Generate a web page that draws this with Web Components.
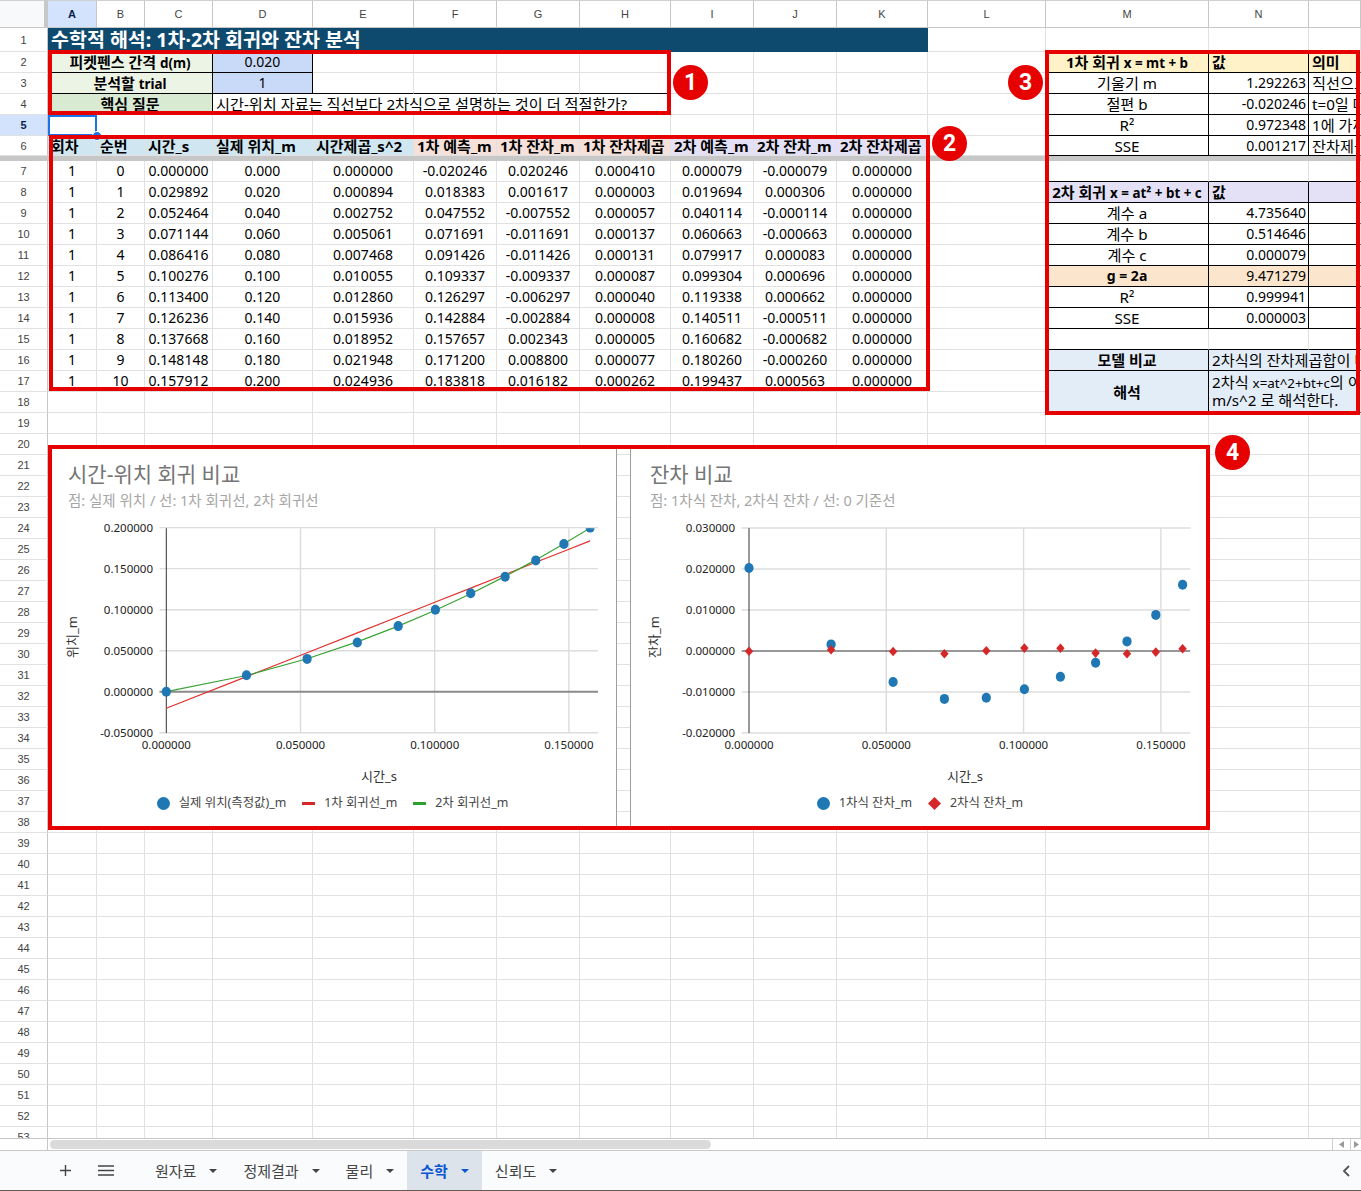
<!DOCTYPE html>
<html lang="ko">
<head>
<meta charset="utf-8">
<title>수학</title>
<style>
  html, body { margin: 0; padding: 0; background: #fff; }
  body { font-family: "Noto Sans", "Noto Sans CJK KR", sans-serif; }
</style>
</head>
<body>
<sheet-app>
  <sheet-grid>
    <cell-cursor></cell-cursor>
    <sheet-chart chart="position" style="--x:48px;--y:445px;--w:569px;--h:384px"></sheet-chart>
    <sheet-chart chart="residual" style="--x:630px;--y:445px;--w:580px;--h:384px"></sheet-chart>
    <red-callout num="1" style="--x:48px;--y:50px;--w:623px;--h:65px;--bx:625px;--by:15px"></red-callout>
    <red-callout num="2" style="--x:49px;--y:135px;--w:881px;--h:256px;--bx:883px;--by:-9px"></red-callout>
    <red-callout num="3" style="--x:1045px;--y:50px;--w:315px;--h:365px;--bx:-37px;--by:15px"></red-callout>
    <red-callout num="4" style="--x:48px;--y:445px;--w:1162px;--h:385px;--bx:1167px;--by:-10px"></red-callout>
  </sheet-grid>
  <sheet-scrollbar></sheet-scrollbar>
  <sheet-tabs active="수학"></sheet-tabs>
</sheet-app>

<script>
const FONT = '"Noto Sans", "Noto Sans CJK KR", sans-serif';

// 회차 데이터: t, x, t^2, 1차 예측, 1차 잔차, 1차 제곱, 2차 예측, 2차 잔차, 2차 제곱
const ROWS = [
  ["0.000000","0.000","0.000000","-0.020246","0.020246","0.000410","0.000079","-0.000079","0.000000"],
  ["0.029892","0.020","0.000894","0.018383","0.001617","0.000003","0.019694","0.000306","0.000000"],
  ["0.052464","0.040","0.002752","0.047552","-0.007552","0.000057","0.040114","-0.000114","0.000000"],
  ["0.071144","0.060","0.005061","0.071691","-0.011691","0.000137","0.060663","-0.000663","0.000000"],
  ["0.086416","0.080","0.007468","0.091426","-0.011426","0.000131","0.079917","0.000083","0.000000"],
  ["0.100276","0.100","0.010055","0.109337","-0.009337","0.000087","0.099304","0.000696","0.000000"],
  ["0.113400","0.120","0.012860","0.126297","-0.006297","0.000040","0.119338","0.000662","0.000000"],
  ["0.126236","0.140","0.015936","0.142884","-0.002884","0.000008","0.140511","-0.000511","0.000000"],
  ["0.137668","0.160","0.018952","0.157657","0.002343","0.000005","0.160682","-0.000682","0.000000"],
  ["0.148148","0.180","0.021948","0.171200","0.008800","0.000077","0.180260","-0.000260","0.000000"],
  ["0.157912","0.200","0.024936","0.183818","0.016182","0.000262","0.199437","0.000563","0.000000"],
];

class SheetApp extends HTMLElement {
  constructor() {
    super();
    this.attachShadow({ mode: "open" });
    this.shadowRoot.innerHTML = `
      <style>
        :host { display: flex; flex-direction: column; height: 1191px; overflow: hidden; background: #fff; }
        .wall { height: 1px; background: #6b5a49; flex: none; }
      </style>
      <slot></slot>
      <div class="wall"></div>`;
  }
}

class SheetGrid extends HTMLElement {
  constructor() {
    super();
    this.attachShadow({ mode: "open" });
  }

  connectedCallback() {
    this.render();
  }

  buildCells() {
    const cells = new Map();
    const put = (r, c, text, opts = {}) => cells.set(r + ":" + c, { text, ...opts });

    // 제목과 입력 영역
    put(1, 1, "수학적 해석: 1차·2차 회귀와 잔차 분석", { span: 11, cls: "title" });
    put(2, 1, "피켓펜스 간격 <small>d(m)</small>", { span: 3, cls: "bold ko c", bg: "#ebf4e5", line: "rb" });
    put(2, 4, "0.020", { cls: "c", bg: "#c9daf8", line: "rb" });
    put(3, 1, "분석할 <small>trial</small>", { span: 3, cls: "bold ko c", bg: "#ebf4e5", line: "rb" });
    put(3, 4, "1", { cls: "c", bg: "#c9daf8", line: "rb" });
    for (const c of [5, 6, 7, 8]) put(3, c, "", { line: "b" });
    put(4, 1, "핵심 질문", { span: 3, cls: "bold ko c", bg: "#d9ead3", line: "rb" });
    put(4, 4, "시간-위치 자료는 직선보다 2차식으로 설명하는 것이 더 적절한가?", { span: 5, cls: "ko", line: "rb" });

    // 표 머리글
    const heads = ["회차","순번","시간_s","실제 위치_m","시간제곱_s^2","1차 예측_m","1차 잔차_m","1차 잔차제곱","2차 예측_m","2차 잔차_m","2차 잔차제곱"];
    heads.forEach((h, i) => {
      const bg = i < 5 ? "#d0e7f2" : i < 8 ? "#f5e0da" : "#e4e1f6";
      put(6, i + 1, h, { cls: "bold ko head", bg });
    });
    ROWS.forEach((row, i) => {
      put(7 + i, 1, "1", { cls: "c" });
      put(7 + i, 2, String(i), { cls: "c" });
      row.forEach((v, j) => put(7 + i, 3 + j, v, { cls: "c" }));
    });

    // 오른쪽 요약 표 (M=13, N=14, O=15)
    const M = 13, N = 14, O = 15;
    const yellow = "#fff2c8", lav = "#e4e1f6", peach = "#fce5cd", blue = "#e3edf8";
    put(2, M, "1차 회귀 <small>x = mt + b</small>", { cls: "bold ko c", bg: yellow, line: "rb" });
    put(2, N, "값", { cls: "bold ko", bg: yellow, line: "rb" });
    put(2, O, "의미", { cls: "bold ko", bg: yellow, line: "b" });
    const first = [["기울기 m","1.292263","직선으로"],["절편 b","-0.020246","t=0일 때"],["R²","0.972348","1에 가까"],["SSE","0.001217","잔차제곱"]];
    first.forEach((f, i) => {
      put(3 + i, M, f[0], { cls: "ko c", line: "rb" });
      put(3 + i, N, f[1], { cls: "r", line: "rb" });
      put(3 + i, O, f[2], { cls: "ko", line: "b" });
    });
    for (const c of [M, N, O]) put(7, c, "", { line: "b" });
    put(8, M, "2차 회귀 <small>x = at² + bt + c</small>", { cls: "bold ko c", bg: lav, line: "rb" });
    put(8, N, "값", { cls: "bold ko", bg: lav, line: "rb" });
    put(8, O, "", { bg: lav, line: "b" });
    const second = [["계수 a","4.735640"],["계수 b","0.514646"],["계수 c","0.000079"],["g = 2a","9.471279"],["R²","0.999941"],["SSE","0.000003"]];
    second.forEach((f, i) => {
      const hot = f[0] === "g = 2a";
      const bg = hot ? peach : undefined;
      put(9 + i, M, f[0], { cls: hot ? "bold c" : "ko c", bg, line: "rb" });
      put(9 + i, N, f[1], { cls: "r", bg, line: "rb" });
      put(9 + i, O, "", { bg, line: "b" });
    });
    for (const c of [M, N, O]) put(15, c, "", { line: "b" });
    put(16, M, "모델 비교", { cls: "bold ko c", bg: blue, line: "rb" });
    put(16, N, "2차식의 잔차제곱합이 더", { span: 2, cls: "ko", bg: blue, line: "b" });
    put(17, M, "해석", { cls: "bold ko c", rows: 2, bg: blue, line: "rb" });
    put(17, N, "2차식 <small>x=at^2+bt+c</small>의 이\nm/s^2 로 해석한다.", { span: 2, rows: 2, cls: "ko wrap", bg: blue, line: "b" });
    return cells;
  }

  render() {
    const letters = ["A","B","C","D","E","F","G","H","I","J","K","L","M","N",""];
    const colW = [48,49,48,68,100,101,83,83,91,83,83,91,118,163,100,52];
    const cells = this.buildCells();
    const toGridRow = r => r <= 6 ? r + 1 : r + 2; // 6행 아래에 고정선 줄이 있다
    let html = `<div class="corner" style="grid-area:1/1"></div>`;
    letters.forEach((l, i) => {
      const on = l === "A" ? " on" : "";
      html += `<div class="colh${on}" style="grid-area:1/${i + 2}">${l}</div>`;
    });
    for (let r = 1; r <= 53; r++) {
      const gr = toGridRow(r);
      const on = r === 5 ? " on" : "";
      html += `<div class="rowh${on}" style="grid-area:${gr}/1">${r}</div>`;
      for (let c = 1; c <= 15; c++) {
        const cell = cells.get(r + ":" + c);
        if (!cell) {
          if (this.covered(cells, r, c)) continue;
          html += `<div class="cell" style="grid-area:${gr}/${c + 1}"></div>`;
          continue;
        }
        const span = cell.span || 1, rows = cell.rows || 1;
        const cls = ["cell", cell.cls || "", (cell.line || "").includes("r") ? "lr" : "", (cell.line || "").includes("b") ? "lb" : ""].join(" ");
        const bg = cell.bg ? `background:${cell.bg};` : "";
        const body = cell.text ? `<span>${cell.text}</span>` : "";
        html += `<div class="${cls}" style="${bg}grid-area:${gr}/${c + 1}/span ${rows}/span ${span}">${body}</div>`;
      }
    }
    html += `<div class="freeze" style="grid-area:8/1/auto/-1"></div>`;
    const rowH = ["28px","24px","21px","21px","21px","21px","20px","5px"].concat(Array(47).fill("21px"));
    this.shadowRoot.innerHTML = `
      <style>
        :host { display: block; position: relative; height: 1138px; overflow: hidden; flex: none; }
        .grid {
          display: grid; width: 1361px;
          grid-template-columns: ${colW.map(w => w + "px").join(" ")};
          grid-template-rows: ${rowH.join(" ")};
          font: 14px/20px ${FONT}; color: #000;
        }
        .corner { background: #f8f9fa; border-top: 1px solid #d0d0d0; border-bottom: 1px solid #c7c7c7; border-right: 4px solid #c7c7c7; box-sizing: border-box; }
        .colh, .rowh { display: flex; align-items: center; justify-content: center; box-sizing: border-box; font: 11px "Liberation Sans", sans-serif; color: #444; }
        .colh { border-top: 1px solid #d0d0d0; border-bottom: 1px solid #c7c7c7; border-right: 1px solid #c7c7c7; }
        .rowh { border-right: 1px solid #c7c7c7; border-bottom: 1px solid #e1e1e1; }
        .colh.on, .rowh.on { background: #d3e3fd; color: #041e49; font-weight: bold; }
        .cell {
          box-sizing: border-box; border-right: 1px solid #e1e1e1; border-bottom: 1px solid #e1e1e1;
          display: flex; align-items: center; padding: 0 3px; overflow: hidden; white-space: nowrap; min-width: 0;
        }
        .c { justify-content: center; padding: 0; }
        .r { justify-content: flex-end; padding-right: 2px; }
        .bold { font-weight: 700; }
        .ko { font-size: 15.2px; }
        .ko.bold { font-size: 15px; }
        .head { padding-left: 3px; padding-right: 0; }
        small { font-size: 13.4px; }
        .wrap { white-space: pre; line-height: 17px; }
        .lr { border-right-color: #000; }
        .lb { border-bottom-color: #000; }
        .title { background: #0e4a6e; color: #fff; font-weight: 700; font-size: 19.5px; border-color: #0e4a6e; padding: 0 0 0 3px; overflow: visible; }
        .freeze { background: #c7c7c7; }
      </style>
      <div class="grid">${html}</div>
      <slot></slot>`;
  }

  covered(cells, r, c) {
    for (const [key, cell] of cells) {
      const [cr, cc] = key.split(":").map(Number);
      const w = cell.span || 1, h = cell.rows || 1;
      if (r >= cr && r < cr + h && c >= cc && c < cc + w) return true;
    }
    return false;
  }
}

class CellCursor extends HTMLElement {
  constructor() {
    super();
    this.attachShadow({ mode: "open" });
    this.shadowRoot.innerHTML = `
      <style>
        :host { position: absolute; left: 48px; top: 115px; width: 49px; height: 21px; box-sizing: border-box; border: 2px solid #1a73e8; }
        .handle { position: absolute; right: -7px; bottom: -7px; width: 8px; height: 8px; border-radius: 50%; background: #1a73e8; border: 1px solid #fff; }
      </style>
      <div class="handle"></div>`;
  }
}

class RedCallout extends HTMLElement {
  constructor() {
    super();
    this.attachShadow({ mode: "open" });
  }

  connectedCallback() {
    this.shadowRoot.innerHTML = `
      <style>
        :host {
          position: absolute; left: var(--x); top: var(--y); width: var(--w); height: var(--h);
          box-sizing: border-box; border: 4px solid #e60000; pointer-events: none;
        }
        .num {
          position: absolute; left: calc(var(--bx) - 4px); top: calc(var(--by) - 4px); width: 35px; height: 35px; border-radius: 50%;
          background: #e60000; color: #fff; font: 700 23px/35px "Roboto", sans-serif; text-align: center;
        }
      </style>
      <div class="num">${this.getAttribute("num")}</div>`;
  }
}

const POS_T = ROWS.map(r => +r[0]);
const CHARTS = {
  position: {
    ox: 49, width: 567,
    title: "시간-위치 회귀 비교",
    sub: "점: 실제 위치 / 선: 1차 회귀선, 2차 회귀선",
    ytitle: "위치_m", xtitleX: 379, ytitleX: 73,
    x0: 166.3, xs: 2684, y0: 691.7, ys: 820.5,
    left: 159.5, right: 598, top: 528.2, bottom: 733,
    labelX: 153,
    yticks: [0.2, 0.15, 0.1, 0.05, 0, -0.05],
    zeroColor: "#8a8a8a", zeroWidth: 2,
    lines: [
      { color: "#e0322f", col: 3 },
      { color: "#3aa335", col: 6 },
    ],
    dots: { col: 1, shape: "circle" },
    legend: [["circle", "실제 위치(측정값)_m"], ["red", "1차 회귀선_m"], ["green", "2차 회귀선_m"]],
  },
  residual: {
    ox: 631, width: 578,
    title: "잔차 비교",
    sub: "점: 1차식 잔차, 2차식 잔차 / 선: 0 기준선",
    ytitle: "잔차_m", xtitleX: 965, ytitleX: 655,
    x0: 749, xs: 2746, y0: 651, ys: 4100,
    left: 741.7, right: 1190.2, top: 528.2, bottom: 733,
    labelX: 735,
    yticks: [0.03, 0.02, 0.01, 0, -0.01, -0.02],
    zeroColor: "#333", zeroWidth: 1.2,
    lines: [],
    dots: { col: 4, shape: "circle" },
    dots2: { col: 7, shape: "diamond" },
    legend: [["circle", "1차식 잔차_m"], ["diamond", "2차식 잔차_m"]],
  },
};

class SheetChart extends HTMLElement {
  constructor() {
    super();
    this.attachShadow({ mode: "open" });
  }

  connectedCallback() {
    this.render(CHARTS[this.getAttribute("chart")]);
  }

  diamond(x, y, w, h) {
    return `<polygon fill="#d62728" points="${x},${y - h} ${x + w},${y} ${x},${y + h} ${x - w},${y}"/>`;
  }

  plot(cfg) {
    const px = t => cfg.x0 + t * cfg.xs;
    const py = v => cfg.y0 - v * cfg.ys;
    const fmt = v => v.toFixed(6);
    let s = "";
    for (const v of cfg.yticks) {
      const y = py(v).toFixed(1);
      if (v !== 0) s += `<line x1="${cfg.left}" x2="${cfg.right}" y1="${y}" y2="${y}" stroke="#dcdcdc" stroke-width="1.4"/>`;
      s += `<text x="${cfg.labelX}" y="${(+y + 4).toFixed(1)}" text-anchor="end">${fmt(v)}</text>`;
    }
    for (const t of [0.05, 0.1, 0.15]) {
      const x = px(t).toFixed(1);
      s += `<line x1="${x}" x2="${x}" y1="${cfg.top}" y2="${cfg.bottom}" stroke="#dcdcdc" stroke-width="1.4"/>`;
    }
    for (const t of [0, 0.05, 0.1, 0.15]) {
      s += `<text x="${px(t).toFixed(1)}" y="749" text-anchor="middle">${fmt(t)}</text>`;
    }
    const zy = py(0).toFixed(1);
    s += `<line x1="${cfg.left}" x2="${cfg.right}" y1="${zy}" y2="${zy}" stroke="${cfg.zeroColor}" stroke-width="${cfg.zeroWidth}"/>`;
    s += `<line x1="${cfg.x0}" x2="${cfg.x0}" y1="${cfg.top}" y2="${cfg.bottom}" stroke="#333" stroke-width="1"/>`;

    let marks = "";
    for (const line of cfg.lines) {
      const pts = POS_T.map((t, i) => px(t).toFixed(1) + "," + py(+ROWS[i][line.col]).toFixed(1)).join(" ");
      marks += `<polyline points="${pts}" fill="none" stroke="${line.color}" stroke-width="1.2"/>`;
    }
    POS_T.forEach((t, i) => {
      marks += `<ellipse cx="${px(t).toFixed(1)}" cy="${py(+ROWS[i][cfg.dots.col]).toFixed(1)}" rx="4.6" ry="5" fill="#1f77b4"/>`;
    });
    if (cfg.dots2) {
      POS_T.forEach((t, i) => {
        marks += this.diamond(+px(t).toFixed(1), +py(+ROWS[i][cfg.dots2.col]).toFixed(1), 4.2, 4.8);
      });
    }
    s += `<clipPath id="plot"><rect x="${cfg.left - 10}" y="${cfg.top}" width="${cfg.right - cfg.left + 20}" height="${cfg.bottom - cfg.top + 10}"/></clipPath>`;
    s += `<g clip-path="url(#plot)">${marks}</g>`;

    s += `<text class="axis" x="${cfg.xtitleX}" y="781" text-anchor="middle">시간_s</text>`;
    s += `<text class="axis" x="${cfg.ytitleX + 4}" y="637" text-anchor="middle" transform="rotate(-90 ${cfg.ytitleX + 4} 637)">${cfg.ytitle}</text>`;
    // viewBox는 시트 좌표를 그대로 쓴다
    return `<svg viewBox="${cfg.ox} 510 ${cfg.width} 280">${s}</svg>`;
  }

  legendItem([kind, label]) {
    let icon;
    if (kind === "circle") icon = `<circle cx="6.5" cy="6.5" r="6.5" fill="#1f77b4"/>`;
    if (kind === "diamond") icon = `<polygon points="6.5,0 13,6.5 6.5,13 0,6.5" fill="#d62728"/>`;
    if (kind === "red") icon = `<rect y="5" width="13" height="3" fill="#d62728"/>`;
    if (kind === "green") icon = `<rect y="5" width="13" height="3" fill="#2ca02c"/>`;
    return `<span class="item"><svg width="13" height="13" viewBox="0 0 13 13">${icon}</svg><span>${label}</span></span>`;
  }

  render(cfg) {
    this.shadowRoot.innerHTML = `
      <style>
        :host {
          position: absolute; left: var(--x); top: var(--y); width: var(--w); height: var(--h);
          display: flex; flex-direction: column; box-sizing: border-box; background: #fff;
          border-left: 1px solid #9e9e9e; border-right: 1px solid #9e9e9e;
          font-family: ${FONT};
        }
        .head { height: 65px; box-sizing: border-box; padding: 16px 0 0 19px; flex: none; }
        .title { font-size: 21px; line-height: 26px; color: #757575; }
        .sub { font-size: 14.5px; line-height: 20px; margin-top: 3px; color: #a6a6a6; }
        svg { display: block; }
        .chart { height: 280px; flex: none; }
        .chart svg { width: 100%; height: 100%; }
        .chart text { font: 11.5px ${FONT}; fill: #222; }
        .chart text.axis { font-size: 13px; fill: #333; }
        .legend { display: flex; justify-content: center; gap: 16px; margin-top: 3px; font-size: 12.4px; line-height: 20px; color: #444; }
        .item { display: flex; align-items: center; gap: 9px; }
      </style>
      <div class="head">
        <div class="title">${cfg.title}</div>
        <div class="sub">${cfg.sub}</div>
      </div>
      <div class="chart">${this.plot(cfg)}</div>
      <div class="legend">${cfg.legend.map(l => this.legendItem(l)).join("")}</div>`;
  }
}

class SheetScrollbar extends HTMLElement {
  constructor() {
    super();
    this.attachShadow({ mode: "open" });
    this.shadowRoot.innerHTML = `
      <style>
        :host { display: flex; flex: none; height: 13px; box-sizing: border-box; background: #fff; border-top: 1px solid #c7c7c7; border-bottom: 1px solid #c7c7c7; }
        .gutter { width: 48px; box-sizing: border-box; border-right: 1px solid #c7c7c7; }
        .track { flex: 1; padding: 1px 2px; }
        .thumb { width: 661px; height: 9px; border-radius: 5px; background: #dadada; }
        .btn { width: 18px; box-sizing: border-box; border-left: 1px solid #d0d0d0; display: flex; align-items: center; justify-content: center; }
        .btn + .btn { width: 11px; }
      </style>
      <div class="gutter"></div>
      <div class="track"><div class="thumb"></div></div>
      <div class="btn"><svg width="5" height="7" viewBox="0 0 5 7"><path d="M5 0V7L0 3.5Z" fill="#9a9a9a"/></svg></div>
      <div class="btn"><svg width="5" height="7" viewBox="0 0 5 7"><path d="M0 0V7L5 3.5Z" fill="#9a9a9a"/></svg></div>`;
  }
}

class SheetTabs extends HTMLElement {
  constructor() {
    super();
    this.attachShadow({ mode: "open" });
  }

  connectedCallback() {
    const active = this.getAttribute("active");
    const names = ["원자료", "정제결과", "물리", "수학", "신뢰도"];
    const tabs = names.map(n => `
      <div class="tab ${n === active ? "on" : ""}">
        <span>${n}</span>
        <svg width="8" height="4" viewBox="0 0 8 4"><path d="M0 0H8L4 4Z" fill="currentColor"/></svg>
      </div>`).join("");
    this.shadowRoot.innerHTML = `
      <style>
        :host {
          display: flex; flex: none; height: 39px; align-items: stretch; background: #f9fbfd; padding-left: 47px;
          font: 15px/20px ${FONT}; color: #444;
        }
        .icon { width: 36px; display: flex; align-items: center; justify-content: center; color: #444; }
        .icon + .icon { margin-left: 5px; margin-right: 18px; }
        .tab { display: flex; align-items: center; gap: 13px; padding: 0 13px; }
        .tab.on { background: #dde3ea; color: #0b57d0; font-weight: 700; }
        .end { margin-left: auto; width: 19px; display: flex; align-items: center; }
      </style>
      <div class="icon"><svg width="11" height="11" viewBox="0 0 11 11"><path d="M5.5 0V11M0 5.5H11" stroke="currentColor" stroke-width="1.4"/></svg></div>
      <div class="icon"><svg width="16" height="11" viewBox="0 0 16 11"><path d="M0 1H16M0 5.5H16M0 10H16" stroke="currentColor" stroke-width="1.4"/></svg></div>
      ${tabs}
      <div class="end"><svg width="8" height="12" viewBox="0 0 8 12"><path d="M7 1L2 6L7 11" fill="none" stroke="#555" stroke-width="1.8"/></svg></div>`;
  }
}

customElements.define("sheet-app", SheetApp);
customElements.define("sheet-grid", SheetGrid);
customElements.define("cell-cursor", CellCursor);
customElements.define("red-callout", RedCallout);
customElements.define("sheet-chart", SheetChart);
customElements.define("sheet-scrollbar", SheetScrollbar);
customElements.define("sheet-tabs", SheetTabs);
</script>
</body>
</html>
